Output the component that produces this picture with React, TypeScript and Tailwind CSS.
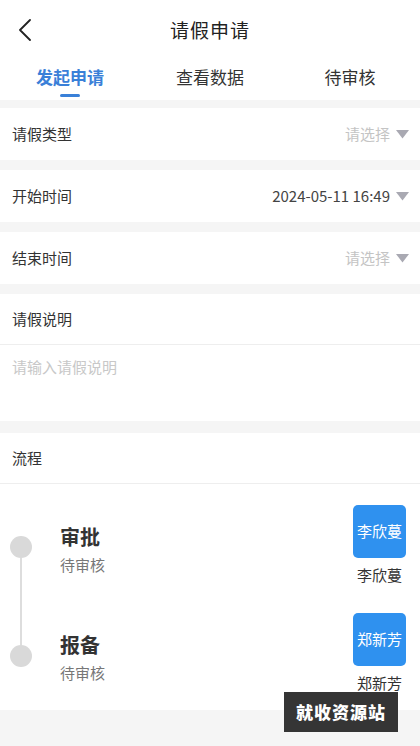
import React from 'react';

const font = { fontFamily: '"Noto Sans CJK SC", "Noto Sans", sans-serif' };

function Caret() {
  return (
    <svg width="13" height="9" viewBox="0 0 13 9" className="ml-[6px]">
      <path d="M0 0 H13 L6.5 8.5 Z" fill="#a9a9b2" />
    </svg>
  );
}

function SelectRow({ label, value, placeholder }: { label: string; value?: string; placeholder?: string }) {
  return (
    <div className="flex h-[52px] items-center justify-between bg-white pl-[12px] pr-[11px]">
      <span className="text-[15px] text-[#333]">{label}</span>
      <div className="flex items-center">
        {value ? (
          <span className="text-[15px] text-[#444]">{value}</span>
        ) : (
          <span className="text-[15px] text-[#c4c4c4]">{placeholder}</span>
        )}
        <Caret />
      </div>
    </div>
  );
}

const flow = [
  { title: '审批', status: '待审核', person: '李欣蔓' },
  { title: '报备', status: '待审核', person: '郑新芳' },
];

export default function App() {
  const tabs = ['发起申请', '查看数据', '待审核'];

  return (
    <div className="relative min-h-[746px] w-[420px] bg-[#f5f5f5]" style={font}>
      {/* 顶部标题栏 */}
      <div className="bg-white">
        <div className="relative flex h-[60px] items-center justify-center">
          <svg width="14" height="22" viewBox="0 0 14 22" className="absolute left-[18px] top-[19px]">
            <path d="M12 1 L2 11 L12 21" fill="none" stroke="#222" strokeWidth="1.8" strokeLinecap="round" strokeLinejoin="round" />
          </svg>
          <span className="text-[19px] tracking-[1px] text-[#222]">请假申请</span>
        </div>

        {/* 标签页 */}
        <div className="flex h-[40px]">
          {tabs.map((t, i) => (
            <div key={t} className="flex flex-1 flex-col items-center pt-[7px]">
              <span
                className={
                  i === 0
                    ? 'text-[17px] font-bold leading-[20px] text-[#3a80d8]'
                    : 'text-[17px] leading-[20px] text-[#333]'
                }
              >
                {t}
              </span>
              {i === 0 && <div className="mt-[7px] h-[3px] w-[20px] rounded-full bg-[#3a80d8]" />}
            </div>
          ))}
        </div>
      </div>

      {/* 表单 */}
      <div className="flex flex-col gap-[10px] pt-[8px]">
        <SelectRow label="请假类型" placeholder="请选择" />
        <SelectRow label="开始时间" value="2024-05-11 16:49" />
        <SelectRow label="结束时间" placeholder="请选择" />

        <div className="bg-white">
          <div className="flex h-[51px] items-center border-b border-[#eeeeee] pl-[12px]">
            <span className="text-[15px] text-[#333]">请假说明</span>
          </div>
          <div className="h-[76px] px-[12px] pt-[9px]">
            <span className="text-[15px] text-[#c8c8c8]">请输入请假说明</span>
          </div>
        </div>

        <div className="mt-[2px] bg-white">
          <div className="flex h-[51px] items-center border-b border-[#eeeeee] pl-[12px]">
            <span className="text-[15px] text-[#333]">流程</span>
          </div>

          {/* 流程时间线 */}
          <div className="flex pb-[17px] pl-[10px] pr-[14px]">
            <div className="flex w-[22px] flex-col items-center pt-[52px]">
              <div className="h-[22px] w-[22px] rounded-full bg-[#d9d9d9]" />
              <div className="h-[87px] w-[2px] bg-[#dddddd]" />
              <div className="h-[22px] w-[22px] rounded-full bg-[#d9d9d9]" />
            </div>
            <div className="ml-[28px] flex flex-1 flex-col gap-[28px] pt-[21px]">
              {flow.map((f) => (
                <div key={f.title} className="flex justify-between">
                  <div className="pt-[19px]">
                    <div className="text-[20px] font-bold leading-[26px] text-[#333]">{f.title}</div>
                    <div className="mt-[5px] text-[15px] leading-[20px] text-[#777]">{f.status}</div>
                  </div>
                  <div className="flex flex-col items-center">
                    <div className="flex h-[53px] w-[53px] items-center justify-center rounded-[5px] bg-[#2f91ef]">
                      <span className="text-[15px] text-white">{f.person}</span>
                    </div>
                    <span className="mt-[7px] text-[15px] leading-[20px] text-[#333]">{f.person}</span>
                  </div>
                </div>
              ))}
            </div>
          </div>
        </div>
      </div>

      {/* 水印 */}
      <div className="absolute left-[284px] top-[692px] flex h-[40px] w-[114px] items-center justify-center bg-[#353535]">
        <span className="text-[17px] font-black tracking-[1px] text-white">就收资源站</span>
      </div>
    </div>
  );
}
